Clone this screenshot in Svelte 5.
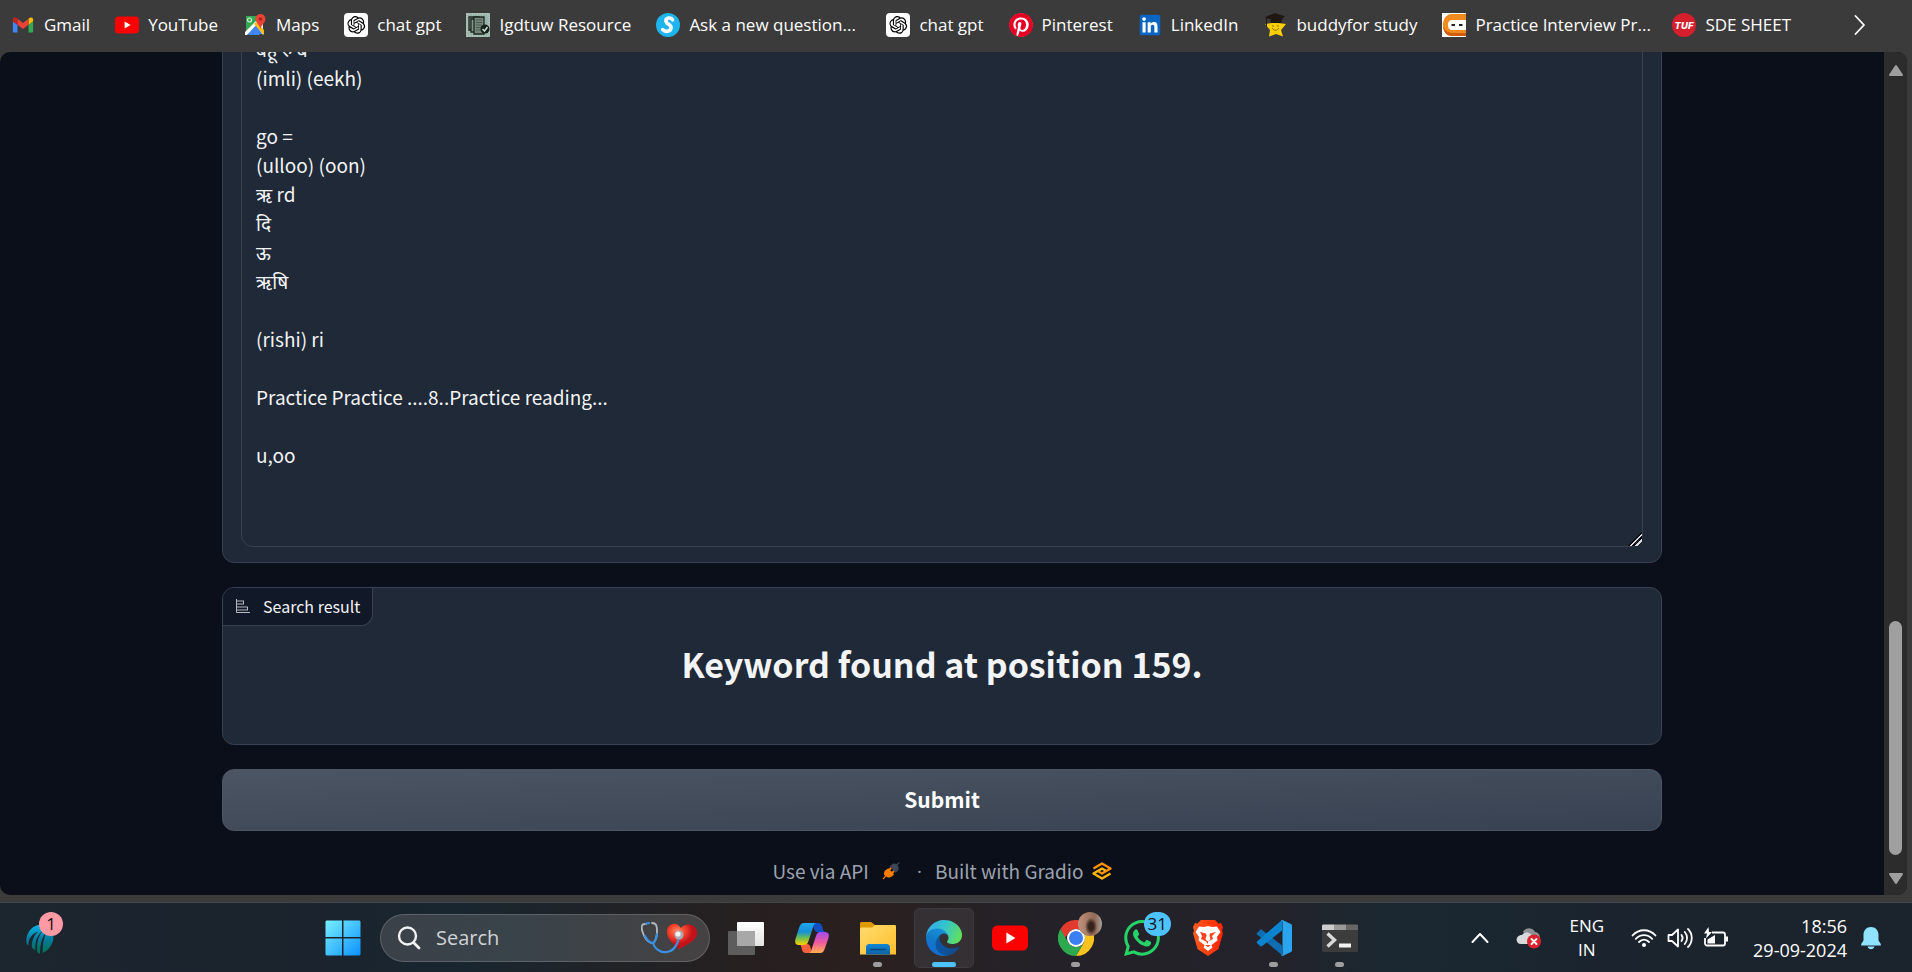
<script>
  const bookmarks = [
    { icon: 'gmail', label: 'Gmail' },
    { icon: 'youtube', label: 'YouTube' },
    { icon: 'maps', label: 'Maps' },
    { icon: 'openai', label: 'chat gpt' },
    { icon: 'docs', label: 'Igdtuw Resource' },
    { icon: 'ask', label: 'Ask a new question...', clipped: true },
    { icon: 'openai', label: 'chat gpt' },
    { icon: 'pinterest', label: 'Pinterest' },
    { icon: 'linkedin', label: 'LinkedIn' },
    { icon: 'buddy', label: 'buddyfor study' },
    { icon: 'ninja', label: 'Practice Interview Pr...', clipped: true },
    { icon: 'tuf', label: 'SDE SHEET' }
  ];

  const apps = [
    { icon: 'taskview' },
    { icon: 'copilot' },
    { icon: 'explorer', open: true },
    { icon: 'edge', active: true },
    { icon: 'youtube' },
    { icon: 'chrome', open: true },
    { icon: 'whatsapp', badge: '31' },
    { icon: 'brave' },
    { icon: 'vscode', open: true },
    { icon: 'terminal', open: true }
  ];

  let text = $state(
    [
      'बहू रु ब',
      '(imli) (eekh)',
      '',
      'go =',
      '(ulloo) (oon)',
      'ऋ rd',
      'दि',
      'ऊ',
      'ऋषि',
      '',
      '(rishi) ri',
      '',
      'Practice Practice ....8..Practice reading...',
      '',
      'u,oo'
    ].join('\n')
  );
</script>

{#snippet icon(name)}
  {#if name === 'gmail'}
    <svg viewBox="44 27 104 96"><path fill="#4285f4" d="M58 108h14V74L52 59v43c0 3.32 2.69 6 6 6" /><path fill="#34a853" d="M120 108h14c3.32 0 6-2.69 6-6V59l-20 15" /><path fill="#fbbc04" d="M120 48v26l20-15v-8c0-7.42-8.47-11.65-14.4-7.2" /><path fill="#ea4335" d="M72 74V48l24 18 24-18v26L96 92" /><path fill="#c5221f" d="M52 51v8l20 15V48l-5.6-4.2c-5.94-4.45-14.4-.22-14.4 7.2" /></svg>
  {:else if name === 'youtube'}
    <svg viewBox="0 0 24 24"><rect y="3.6" width="24" height="16.8" rx="3.6" fill="#f00" /><path fill="#fff" d="M9.6 8.4v7.2l6-3.6z" /></svg>
  {:else if name === 'maps'}
    <svg viewBox="0 0 24 24">
      <path fill="#34a853" d="M3 3h14v9L3 21z" /><path fill="#4285f4" d="M3 21 12 12l9 9z" /><path fill="#fff" d="M2 19 15 6l2 2L4 22H2z" /><path fill="#e8eaed" d="m13 12 7-3v13z" /><path fill="#fbbc04" d="m11 11 2-2 8 8v5z" /><path fill="#4285f4" d="m5 22 6-7 6 7z" />
      <circle cx="6.5" cy="7" r="2" fill="none" stroke="#d5efdc" stroke-width="1.2" />
      <path fill="#ea4335" d="M17.500 1a5 5 0 0 1 5 5c0 4-4 5-5 10-1-5-5-6-5-10a5 5 0 0 1 5-5z" /><circle cx="17.500" cy="6" r="1.800" fill="#a52714" />
    </svg>
  {:else if name === 'openai'}
    <svg viewBox="0 0 24 24"><rect width="24" height="24" rx="4" fill="#fff" /><g transform="translate(3.4 3) scale(.74)"><path d="M22.2819 9.8211a5.9847 5.9847 0 0 0-.5157-4.9108 6.0462 6.0462 0 0 0-6.5098-2.9A6.0651 6.0651 0 0 0 4.9807 4.1818a5.9847 5.9847 0 0 0-3.9977 2.9 6.0462 6.0462 0 0 0 .7427 7.0966 5.98 5.98 0 0 0 .511 4.9107 6.051 6.051 0 0 0 6.5146 2.9001A5.9847 5.9847 0 0 0 13.2599 24a6.0557 6.0557 0 0 0 5.7718-4.2058 5.9894 5.9894 0 0 0 3.9977-2.9001 6.0557 6.0557 0 0 0-.7475-7.0729zm-9.022 12.6081a4.4755 4.4755 0 0 1-2.8764-1.0408l.1419-.0804 4.7783-2.7582a.7948.7948 0 0 0 .3927-.6813v-6.7369l2.02 1.1686a.071.071 0 0 1 .038.052v5.5826a4.504 4.504 0 0 1-4.4945 4.4944zm-9.6607-4.1254a4.4708 4.4708 0 0 1-.5346-3.0137l.142.0852 4.783 2.7582a.7712.7712 0 0 0 .7806 0l5.8428-3.3685v2.3324a.0804.0804 0 0 1-.0332.0615L9.74 19.9502a4.4992 4.4992 0 0 1-6.1408-1.6464zM2.3408 7.8956a4.485 4.485 0 0 1 2.3655-1.9728V11.6a.7664.7664 0 0 0 .3879.6765l5.8144 3.3543-2.0201 1.1685a.0757.0757 0 0 1-.071 0l-4.8303-2.7865A4.504 4.504 0 0 1 2.3408 7.872zm16.5963 3.8558L13.1038 8.364 15.1192 7.2a.0757.0757 0 0 1 .071 0l4.8303 2.7913a4.4944 4.4944 0 0 1-.6765 8.1042v-5.6772a.79.79 0 0 0-.407-.667zm2.0107-3.0231l-.142-.0852-4.7735-2.7818a.7759.7759 0 0 0-.7854 0L9.409 9.2297V6.8974a.0662.0662 0 0 1 .0284-.0615l4.8303-2.7866a4.4992 4.4992 0 0 1 6.6802 4.66zM8.3065 12.863l-2.02-1.1638a.0804.0804 0 0 1-.038-.0567V6.0742a4.4992 4.4992 0 0 1 7.3757-3.4537l-.142.0805L8.704 5.459a.7948.7948 0 0 0-.3927.6813zm1.0976-2.3654l2.602-1.4998 2.6069 1.4998v2.9994l-2.5974 1.4997-2.6067-1.4997Z" /></g></svg>
  {:else if name === 'docs'}
    <svg viewBox="0 0 24 24"><rect width="24" height="24" fill="#9cb5ab" /><path fill="none" stroke="#c9ddd4" stroke-dasharray="1 1.500" d="M1 1h22v22H1z" /><path fill="#76867b" stroke="#1d2822" stroke-width="1.300" d="M3 4h10v13H3z" /><path fill="#83968a" stroke="#1d2822" stroke-width="1.300" d="M5 6h10v13H5z" /><path fill="#76867b" stroke="#1d2822" stroke-width="1.300" d="M8 4h10v17H8z" /><path stroke="#48584e" d="M10 7h6M10 9.500h6M10 12h6M10 14.500h5M10 17h5" /><circle cx="19" cy="16" r="4.500" fill="#15201a" /><path fill="none" stroke="#c9ddd4" stroke-width="1.500" d="m16.500 16 2 2 3-4" /></svg>
  {:else if name === 'ask'}
    <svg viewBox="0 0 24 24"><circle cx="12" cy="12" r="12" fill="#1eb4ee" /><path fill="none" stroke="#fff" stroke-width="3.600" stroke-linecap="round" d="M16.500 6.800c-1.500-3-7-2-6.600 1.400C10.200 11.500 15.500 11 15 15c-.5 3.800-6 4.300-8.300 1.600" /></svg>
  {:else if name === 'pinterest'}
    <svg viewBox="0 0 24 24"><circle cx="12" cy="12" r="11.500" fill="#fff" /><path fill="#e60023" d="M12.017 0C5.396 0 .029 5.367.029 11.987c0 5.079 3.158 9.417 7.618 11.162-.105-.949-.199-2.403.041-3.439.219-.937 1.406-5.957 1.406-5.957s-.359-.72-.359-1.781c0-1.663.967-2.911 2.168-2.911 1.024 0 1.518.769 1.518 1.688 0 1.029-.653 2.567-.992 3.992-.285 1.193.6 2.165 1.775 2.165 2.128 0 3.768-2.245 3.768-5.487 0-2.861-2.063-4.869-5.008-4.869-3.41 0-5.409 2.562-5.409 5.199 0 1.033.394 2.143.889 2.741.099.12.112.225.085.345-.09.375-.293 1.199-.334 1.363-.053.225-.172.271-.401.165-1.495-.69-2.433-2.878-2.433-4.646 0-3.776 2.748-7.252 7.92-7.252 4.158 0 7.392 2.967 7.392 6.923 0 4.135-2.607 7.462-6.233 7.462-1.214 0-2.354-.629-2.758-1.379l-.749 2.848c-.269 1.045-1.004 2.352-1.498 3.146 1.123.345 2.306.535 3.55.535 6.607 0 11.985-5.365 11.985-11.987C23.97 5.39 18.592.026 11.985.026L12.017 0z" /></svg>
  {:else if name === 'linkedin'}
    <svg viewBox="-1.500 -1.500 27 27"><rect x="0.500" y="0.500" width="23" height="23" rx="1.800" fill="#0a66c2" /><path fill="#fff" d="M20.447 20.452h-3.554v-5.569c0-1.328-.027-3.037-1.852-3.037-1.853 0-2.136 1.445-2.136 2.939v5.667H9.351V9h3.414v1.561h.046c.477-.9 1.637-1.85 3.37-1.85 3.601 0 4.267 2.37 4.267 5.455v6.286zM5.337 7.433c-1.144 0-2.063-.926-2.063-2.065 0-1.138.92-2.063 2.063-2.063 1.14 0 2.064.925 2.064 2.063 0 1.139-.925 2.065-2.064 2.065zm1.782 13.019H3.555V9h3.564v11.452z" /></svg>
  {:else if name === 'buddy'}
    <svg viewBox="0 0 24 24"><path fill="#fbd000" d="m12 5 3 5 8 1-5 6 2 6.500-7-2.500-7 2.500L7 17l-5-6 7-1z" /><path fill="#211712" d="m2 4 10-4 10 3.500L19 6l-.5 4H8l-.5-4L4 5.500V13H3V5z" /><path fill="none" stroke="#8a6a00" stroke-linecap="round" d="M10 12.500v1M15 12.500v1M9.500 15.500c1.500 2.500 4.500 2.500 6 0" /></svg>
  {:else if name === 'ninja'}
    <svg viewBox="0 0 24 24"><rect width="24" height="24" fill="#fff" /><path fill="#f28b1d" d="M24 1v6H11c-4 0-5 2-5 5s1 5 5 5h13v6H10C4 23 1 18 1 12S4 1 10 1z" /><path fill="#cf5c12" d="M1 13c.5 6 3.500 10 9 10h14v-3H11c-5 0-8-2-10-7z" /><rect x="7" y="8" width="16" height="8" rx="3" fill="#fff" /><path stroke="#222" stroke-width="2" d="M9.500 12H13M17 12h3.500" /></svg>
  {:else if name === 'tuf'}
    <svg viewBox="0 0 24 24"><circle cx="12" cy="12" r="12" fill="#d51f2d" /><text x="12" y="15.500" text-anchor="middle" font-family="Inter, sans-serif" font-size="9.500" font-weight="800" font-style="italic" fill="#fff">TUF</text></svg>
  {:else if name === 'taskview'}
    <svg viewBox="0 0 36 36"><defs><linearGradient id="tv" x2="0" y2="1"><stop stop-color="#fff" /><stop offset="1" stop-color="#e2e2e2" /></linearGradient></defs><rect x="9" y="2" width="27" height="24" rx="1" fill="url(#tv)" /><rect y="11" width="27" height="24" rx="1" fill="#5d5d5d" /><path fill="#a8a8a8" d="M9 11h18v15H9z" /></svg>
  {:else if name === 'copilot'}
    <svg viewBox="0 0 36 36">
      <defs><linearGradient id="cp1" x2="0" y2="1"><stop stop-color="#1ea7f0" /><stop offset=".4" stop-color="#1690d8" /><stop offset=".65" stop-color="#62bb5a" /><stop offset="1" stop-color="#ffd000" /></linearGradient><linearGradient id="cp2" x2="0" y2="1"><stop stop-color="#a24bf0" /><stop offset=".5" stop-color="#ef5a9c" /><stop offset="1" stop-color="#ffae52" /></linearGradient></defs>
      <path fill="#1350c4" d="M17 3h7c3 0 4 2.500 4.500 5 .5 2.500 1.500 4 3.500 4h-9c-4 0-3-9-6-9z" /><path fill="#f4603c" d="M19 33h-7c-3 0-4-2.500-4.500-5-.5-2.500-1-4-3-4h9c4 0 3 9 5.500 9z" />
      <path fill="url(#cp1)" d="M10 3h13c-3 0-3.500 3-4.500 6l-4 12c-1 3-2.500 4-5 4H6c-4.500 0-5.500-2-4.500-6L5 8c1-3 2-5 5-5z" /><path fill="url(#cp2)" d="M26 33H14c3 0 3-2 4-5l4-12c1-3 2-4 4-4h4c4.500 0 5.500 2 4.500 6L31 28c-1 3-2 5-5 5z" />
    </svg>
  {:else if name === 'explorer'}
    <svg viewBox="0 0 36 36"><defs><linearGradient id="fx" x2="1" y2="1"><stop stop-color="#ffdc6e" /><stop offset="1" stop-color="#ffbe2c" /></linearGradient><linearGradient id="fx2" x2="0" y2="1"><stop stop-color="#0f86d4" /><stop offset="1" stop-color="#0e62a6" /></linearGradient></defs><path fill="#e09a00" d="M0 4c0-1.500.5-2 2-2h9l4 3h19c1.500 0 2 .5 2 2v5H0z" /><path fill="url(#fx)" d="M0 10c0-2 .5-2.500 2-2.500h10L15 5h19c1.500 0 2 .5 2 2v27.500H0z" /><path fill="url(#fx2)" d="M6 34.500V28c0-3 1-4 4-4h16c3 0 4 1 4 4v6.500z" /><path stroke="#0a467c" stroke-width="1.600" stroke-linecap="round" d="M11 29.500h14" /></svg>
  {:else if name === 'edge'}
    <svg viewBox="0 0 256 256">
      <defs><linearGradient id="eg1" x2="1"><stop stop-color="#0c59a4" /><stop offset="1" stop-color="#114a8b" /></linearGradient><linearGradient id="eg2" x1="1" x2=".3" y2="1"><stop stop-color="#1b9de2" /><stop offset=".6" stop-color="#127cc8" /><stop offset="1" stop-color="#1568d5" /></linearGradient><linearGradient id="eg3" y1=".3" x2="1" y2=".6"><stop stop-color="#35a8e8" /><stop offset=".45" stop-color="#34c3cf" /><stop offset="1" stop-color="#62e05a" /></linearGradient></defs>
      <path fill="url(#eg1)" d="M231 190.500c-3.400 1.800-6.900 3.400-10.500 4.700a101.500 101.500 0 0 1-35.900 6.500c-47.300 0-88.500-32.500-88.500-74.300 0-11.400 6.400-21.900 16.400-27.300-42.800 1.800-53.800 46.400-53.800 72.500 0 73.900 68.100 81.400 82.800 81.400 7.900 0 19.800-2.300 27-4.600l1.300-.4a128.300 128.300 0 0 0 66.600-52.800 4 4 0 0 0-5.400-5.700z" />
      <path fill="url(#eg2)" d="M105.700 241.400a79.200 79.200 0 0 1-22.700-21.300 80.700 80.700 0 0 1 29.500-120c3.200-1.500 8.500-4.100 15.600-4a32.400 32.400 0 0 1 25.700 13 31.900 31.900 0 0 1 6.300 18.700c0-.2 24.500-79.600-80-79.600-43.900 0-80 41.600-80 78.200 0 19.300 4.300 38.600 12.500 56a128 128 0 0 0 156.400 67.100 75.500 75.500 0 0 1-62.800-8z" />
      <path fill="url(#eg3)" d="M152.300 148.900c-.9 1-3.300 2.500-3.300 5.700 0 2.600 1.700 5.200 4.800 7.300 14.400 10.100 41.700 8.700 41.800 8.700 10.700 0 21.100-2.900 30.300-8.300 18.900-11 30.500-31.200 30.500-53.100.3-22.400-8-37.300-11.300-43.900C223.800 23.900 177.700 0 127.600 0 57.800 0 .6 56.700 0 126.500c.5-36.500 36.800-66 80-66 3.500 0 23.500.3 42 10.100 16.300 8.600 24.900 18.900 30.800 29.200 6.200 10.700 7.300 24.100 7.300 29.500 0 5.300-2.700 13.300-7.800 19.600z" />
    </svg>
  {:else if name === 'chrome'}
    <svg viewBox="0 0 36 36"><path fill="#e33b2e" d="M2.400 9A18 18 0 0 1 33.600 9H18a9 9 0 0 0-7.800 4.500L7 18z" /><path fill="#fcc31e" d="M33.600 9A18 18 0 0 1 18 36l7.800-13.500A9 9 0 0 0 25.800 13.500L24 9z" /><path fill="#2da94f" d="M18 36A18 18 0 0 1 2.400 9l7.800 13.500A9 9 0 0 0 25.800 22.500z" /><circle cx="18" cy="18" r="9" fill="#fff" /><circle cx="18" cy="18" r="7" fill="#3a7ff2" /></svg>
  {:else if name === 'whatsapp'}
    <svg viewBox="0 0 24 24"><path fill="#25d366" d="M17.472 14.382c-.297-.149-1.758-.867-2.03-.967-.273-.099-.471-.148-.67.15-.197.297-.767.966-.94 1.164-.173.199-.347.223-.644.075-.297-.15-1.255-.463-2.39-1.475-.883-.788-1.48-1.761-1.653-2.059-.173-.297-.018-.458.13-.606.134-.133.298-.347.446-.52.149-.174.198-.298.298-.497.099-.198.05-.371-.025-.52-.075-.149-.669-1.612-.916-2.207-.242-.579-.487-.5-.669-.51-.173-.008-.371-.01-.57-.01-.198 0-.52.074-.792.372-.272.297-1.04 1.016-1.04 2.479 0 1.462 1.065 2.875 1.213 3.074.149.198 2.096 3.2 5.077 4.487.709.306 1.262.489 1.694.625.712.227 1.36.195 1.871.118.571-.085 1.758-.719 2.006-1.413.248-.694.248-1.289.173-1.413-.074-.124-.272-.198-.57-.347m-5.421 7.403h-.004a9.87 9.87 0 01-5.031-1.378l-.361-.214-3.741.982.998-3.648-.235-.374a9.86 9.86 0 01-1.51-5.26c.001-5.45 4.436-9.884 9.888-9.884 2.64 0 5.122 1.03 6.988 2.898a9.825 9.825 0 012.893 6.994c-.003 5.45-4.437 9.884-9.885 9.884m8.413-18.297A11.815 11.815 0 0012.05 0C5.495 0 .16 5.335.157 11.892c0 2.096.547 4.142 1.588 5.945L.057 24l6.305-1.654a11.882 11.882 0 005.683 1.448h.005c6.554 0 11.89-5.335 11.893-11.893a11.821 11.821 0 00-3.48-8.413z" /></svg>
  {:else if name === 'brave'}
    <svg viewBox="0 0 36 36"><defs><linearGradient id="br" x2="1"><stop stop-color="#ff5a1f" /><stop offset="1" stop-color="#ff2400" /></linearGradient></defs><path fill="url(#br)" d="M11 0h14l3.500 3.500L31 3l2 4-1 4 1 2-4.500 16L18 36 7.500 29 3 13l1-2-1-4 2-4 2.500.5z" /><path fill="#fff" d="m18 6 4 1 5-.5 3.500 5.500-3.500 5 .5 3.500-4 3-2 1.500 1 2.500L18 31l-4.500-3.500 1-2.500-2-1.500-4-3 .5-3.500-3.500-5L9 6.500l5 .5z" /><path fill="#ff401a" d="m10 12 6 1.500.5 2-1 3.500 1.500 2h2l1.500-2-1-3.500.5-2 6-1.500-4 4 1 3-5 2.500L18 24l-2-2.500-5-2.500 1-3zM15 25h6l-3 2z" /></svg>
  {:else if name === 'vscode'}
    <svg viewBox="0 0 36 36"><path fill="#0f6db3" d="m1 13 3-3c.7-.6 1.500-.6 2.200 0L26 25.500V35L1 14.500c-.6-.5-.6-1 0-1.500z" /><path fill="#0b84cf" d="m1 23 3 3c.7.6 1.500.6 2.200 0L26 10.500V0L1 21.500c-.6.5-.6 1 0 1.500z" /><path fill="#2aa4ee" d="M25 .8c.5-.7 1.200-.9 2-.5l7.500 3.500c1 .5 1.500 1 1.500 2v24.400c0 1-.5 1.500-1.500 2L27 35.700c-.8.4-1.500.2-2-.5l1.500-.7V1.500z" /></svg>
  {:else if name === 'terminal'}
    <svg viewBox="0 0 36 36"><path fill="#3c3c3c" d="M0 6h36v24c0 1.500-.5 2-2 2H2c-1.500 0-2-.5-2-2z" /><path fill="#ccc" d="M0 6c0-1 .5-1.500 1.500-1.500H12V10H0z" /><path fill="#999" d="M12 4.500h12V10H12z" /><path fill="#666" d="M24 4.500h10.500c1 0 1.500.5 1.500 1.500v4H24z" /><path fill="none" stroke="#d8d8d8" stroke-width="3.400" d="m5.500 13.500 7 6.500-7 6.500" /><path fill="#f2f2f2" d="M17 23.500h12v4H17z" /></svg>
  {/if}
{/snippet}

<div class="screen">
  <nav class="bookmarks" aria-label="Bookmarks">
    <ul>
      {#each bookmarks as b}
        <li><a href="#top">{@render icon(b.icon)}<span class:clipped={b.clipped}>{b.label}</span></a></li>
      {/each}
    </ul>
    <button class="more" aria-label="More bookmarks">
      <svg viewBox="0 0 12 20"><path fill="none" stroke="#fff" stroke-width="1.800" stroke-linecap="round" stroke-linejoin="round" d="m1.500 1 8.500 9-8.500 9" /></svg>
    </button>
  </nav>

  <div class="window">
    <div class="page">
      <main>
        <section class="panel source">
          <textarea rows="17" aria-label="Extracted text" spellcheck="false" bind:value={text}></textarea>
        </section>

        <section class="panel result">
          <div class="tab">
            <svg viewBox="0 0 32 32" width="16" height="16"><path fill="#b6bac2" d="M4 2H2v26a2 2 0 0 0 2 2h26v-2H4v-3h22v-8H4v-4h14V5H4zm20 17v4H4v-4zM16 7v4H4V7z" /></svg>
            <span>Search result</span>
          </div>
          <h1>Keyword found at position 159.</h1>
        </section>

        <button class="submit">Submit</button>

        <footer>
          <button class="api">Use via API
            <svg viewBox="0 0 18 18" width="18" height="18"><path fill="#ff7c00" d="m6.500 6.500 5.500 5.500c-1.500 3.500-5.500 4.500-8 2.500l-2.500 3L.5 16.500l2.500-2.500c-2-2.500-1-6 3.500-7.500z" /><path stroke="#ff7c00" stroke-width="1.800" stroke-linecap="round" d="m7 8 2-2M10 11l2-2" /><path fill="#3d4656" d="m8 5 5.500 5.500c3.500-1.500 4-5 2-7.300L17.800 1l-.8-.8-2.500 2C12.500.5 9 1.500 8 5z" /></svg>
          </button>
          <span class="dot">·</span>
          <a href="#gradio">Built with Gradio
            <svg viewBox="0 0 20 18" width="20" height="18"><g fill="none" stroke-width="2.400" stroke-linejoin="round"><path stroke="#ff9100" d="M1.500 6.500 10 1.500l8.500 5L10 11.500 6.500 9.500" /><path stroke="#ffb400" d="M18.500 11.500 10 16.500l-8.500-5L10 6.500l3.500 2" /></g></svg>
          </a>
        </footer>
      </main>
    </div>
    <div class="scrollbar" aria-hidden="true">
      <svg viewBox="0 0 16 12"><path fill="#9f9f9f" stroke="#9f9f9f" stroke-width="2" stroke-linejoin="round" d="m8 2 6 9H2z" /></svg>
      <div class="track"><div class="thumb"></div></div>
      <svg viewBox="0 0 16 12"><path fill="#9f9f9f" stroke="#9f9f9f" stroke-width="2" stroke-linejoin="round" d="m8 10 6-9H2z" /></svg>
    </div>
  </div>

  <div class="taskbar">
    <button class="task widgets" aria-label="Widgets">
      <svg viewBox="0 0 36 36"><defs><linearGradient id="wd" x2="0" y2="1"><stop stop-color="#08b5ea" /><stop offset=".5" stop-color="#057a9b" /><stop offset="1" stop-color="#05714a" /></linearGradient></defs><path fill="url(#wd)" d="M3 25C1 13 9 2 22 3c8 1 12 8 11 16-1 7-6 13-12 16 0-11 1-17 5-24-6 5-8 15-8 25l-3-2c-1-11 1-18 6-24-7 5-9 14-8 22l-4-3C8 22 11 15 16 11 9 13 5 19 5 26z" /></svg>
      <span class="badge pink">1</span>
    </button>

    <div class="center">
      <button class="task" aria-label="Start">
        <svg viewBox="0 0 36 36"><defs><linearGradient id="st" gradientUnits="userSpaceOnUse" x2="36" y2="36"><stop stop-color="#7af0ff" /><stop offset="1" stop-color="#0a90ff" /></linearGradient></defs><path fill="url(#st)" d="M1.500.5H17V17H.5V1.500zM18.500.5h16l1 1V17h-17zM.5 18.500H17v17H1.500l-1-1zM18.500 18.500h17v16l-1 1h-16z" /></svg>
      </button>
      <label class="search">
        <svg class="glass" viewBox="0 0 24 24"><circle cx="10.500" cy="10" r="8.500" fill="none" stroke="#f0f2f3" stroke-width="2.400" /><path stroke="#f0f2f3" stroke-width="2.800" stroke-linecap="round" d="m17 17 5 5" /></svg>
        <input type="text" placeholder="Search" aria-label="Search" />
        <svg class="art" viewBox="0 0 58 34">
          <defs><radialGradient id="ht" cx=".35" cy=".3"><stop stop-color="#ff8f6b" /><stop offset=".5" stop-color="#f4442e" /><stop offset="1" stop-color="#c3121a" /></radialGradient></defs>
          <path fill="url(#ht)" d="M38 28c-7-6-13-11-12-19 1-7 10-9 14-2 5-6 15-4 16 4 1 7-8 12-18 17z" />
          <path fill="none" stroke="#aeb7c0" stroke-width="1.800" stroke-linecap="round" d="M5 3C0 2 0 7 2 12c2 6 5 9 8 10M11 2c5 0 5 4 5 9s-2 10-4 11" />
          <path fill="none" stroke="#3c8fe0" stroke-width="2.200" stroke-linecap="round" d="M5 2.500 8 2M4 15c2 4 5 7 8 7 2-1 4-6 4-9M12 22c2 7 9 10 14 9 7-1 11-8 12-15" />
          <circle cx="38" cy="14" r="4.500" fill="#a7acb2" /><circle cx="37" cy="13" r="2.600" fill="#f1f1f1" />
        </svg>
      </label>
      {#each apps as app}
        <button class="task" class:active={app.active} aria-label={app.icon}>
          {@render icon(app.icon)}
          {#if app.badge}<span class="badge blue">{app.badge}</span>{/if}
          {#if app.icon === 'chrome'}<span class="badge avatar"></span>{/if}
          {#if app.open || app.active}<span class="mark"></span>{/if}
        </button>
      {/each}
    </div>

    <div class="tray">
      <button aria-label="Hidden icons"><svg width="18" height="12" viewBox="0 0 18 12"><path fill="none" stroke="#fff" stroke-width="2" stroke-linecap="round" stroke-linejoin="round" d="m1.500 10 7.500-8 7.500 8" /></svg></button>
      <button aria-label="Cloud sync error"><svg width="26" height="22" viewBox="0 0 26 22"><path fill="#8d9194" d="M7 5c2-5 10-5 12 0 3 0 5 3 5 6l-8 2z" /><path fill="#d7d9da" d="M5 17c-6 0-6-9 1-9 4-5 10-2 11 3l-2 6z" /><circle cx="18" cy="14.500" r="7" fill="#d9232e" /><path stroke="#fff" stroke-width="1.800" stroke-linecap="round" d="m15.500 12 5 5m0-5-5 5" /></svg></button>
      <button class="lang">ENG<br />IN</button>
      <button class="status" aria-label="Network, sound and battery">
        <svg width="26" height="20" viewBox="0 0 26 20"><g fill="none" stroke="#fff" stroke-width="1.800" stroke-linecap="round"><path d="M1.500 7.500c6.500-7 16.500-7 23 0M4.800 10.800c4.700-5 11.700-5 16.400 0M8 14c3-3 7-3 10 0" /></g><circle cx="13" cy="17" r="2" fill="#fff" /></svg>
        <svg width="26" height="22" viewBox="0 0 26 22"><g fill="none" stroke="#fff" stroke-width="1.800" stroke-linecap="round" stroke-linejoin="round"><path d="M1.500 8v6H5l6 5.500v-17L5 8zM14.500 8c1.500 2 1.500 4 0 6M17.800 5c3 3.500 3 8.500 0 12M21 2c5 5 5 13 0 18" /></g></svg>
        <svg width="26" height="22" viewBox="0 0 26 22"><path fill="none" stroke="#fff" stroke-width="1.800" stroke-linejoin="round" d="M9 5.500h11c1 0 2 1 2 2v9c0 1-1 2-2 2H4c-1 0-2-1-2-2V11" /><path fill="#fff" d="M22.500 9.500H25v5h-2.500zM4.500 12.500 12 8v8.500H4.500zM5.500 0 1 6.500h3l-1 5L9 5H6z" /></svg>
      </button>
      <button class="clock">18:56<br />29-09-2024</button>
      <button aria-label="Notifications"><svg width="20" height="24" viewBox="0 0 20 24"><path fill="#8fe3ff" d="M10 1c4.500 0 7.500 3.500 7.500 8v5.500L19.800 18v1.500H.2V18l2.300-3.500V9C2.500 4.500 5.500 1 10 1zM6.500 20.500h7c-1 3.500-6 3.500-7 0z" /></svg></button>
    </div>
  </div>
</div>

<style>
  :global(body) {
    margin: 0;
    background: #3b3b3b;
  }
  .screen {
    --ui: 'Segoe UI', 'Open Sans', 'Noto Sans', sans-serif;
    --source: 'Source Sans Pro', 'Noto Sans CJK SC', 'Noto Sans', sans-serif;
    display: grid;
    grid-template-rows: 52px minmax(0, 1fr) 70px;
    height: 100vh;
    overflow: hidden;
    font-family: var(--ui);
    background: #3b3b3b;
  }
  button {
    padding: 0;
    border: 0;
    background: none;
    color: inherit;
    font: inherit;
  }
  a {
    color: inherit;
    text-decoration: none;
  }
  svg {
    display: block;
    flex: none;
  }

  .bookmarks {
    display: flex;
    align-items: center;
    justify-content: space-between;
    padding: 0 46px 2px 11px;
    color: #fff;
    font-size: 17px;
    line-height: 24px;
  }
  ul {
    display: flex;
    gap: 25px;
    margin: 0;
    padding: 0;
    list-style: none;
  }
  li a {
    display: flex;
    gap: 9px;
    white-space: nowrap;
  }
  li svg {
    width: 24px;
    height: 24px;
  }
  .clipped {
    width: 172px;
  }
  .more svg {
    width: 12px;
    height: 20px;
  }

  .window {
    display: flex;
    min-height: 0;
    margin: 0 5px 7px 0;
    border-radius: 10px;
    overflow: hidden;
    background: #0b0f19;
  }
  .page {
    flex: 1;
    display: flex;
    flex-direction: column;
    justify-content: flex-end;
    align-items: center;
    min-width: 0;
    overflow: hidden;
    font-family: var(--source);
  }
  main {
    display: flex;
    flex-direction: column;
    gap: 24px;
    width: 100%;
    max-width: 1440px;
  }
  .panel {
    border: 1px solid #374151;
    border-radius: 12px;
    background: #1f2937;
    color: #f3f4f6;
  }
  .source {
    display: flex;
    padding: 15px 18px;
  }
  textarea {
    flex: 1;
    padding: 15px 14px 19px;
    border: 1px solid #374151;
    border-radius: 12px;
    background: #1f2937;
    color: #f3f4f6;
    font-family: var(--source);
    font-size: 19px;
    line-height: 29px;
    resize: vertical;
    outline: 0;
    overflow: hidden;
  }
  textarea::-webkit-resizer {
    background: linear-gradient(135deg, transparent 52%, #0a0d12 52% 57%, #d5d8dc 57% 65%, #0a0d12 65% 70%, transparent 70% 73%, #0a0d12 73% 76%, #d5d8dc 76% 84%, transparent 84%);
  }
  .result {
    min-height: 156px;
    overflow: hidden;
  }
  .tab {
    display: flex;
    align-items: center;
    gap: 12px;
    width: max-content;
    height: 36px;
    padding: 0 12px 1px;
    border: solid #374151;
    border-width: 0 1px 1px 0;
    border-radius: 0 0 12px 0;
    background: #111827;
    font-size: 16px;
    line-height: 24px;
  }
  h1 {
    margin: 10px 0 0;
    text-align: center;
    font-size: 34px;
    line-height: 56px;
    font-weight: 600;
  }
  .submit {
    height: 62px;
    padding-bottom: 2px;
    border: 1px solid #4b5563;
    border-radius: 12px;
    background: linear-gradient(to bottom right, #4b5563, #374151);
    color: #fff;
    font-size: 21px;
    line-height: 32px;
    font-weight: 600;
  }
  footer {
    display: flex;
    justify-content: center;
    gap: 13px;
    padding-bottom: 8px;
    color: #9ca3af;
    font-size: 19px;
    line-height: 32px;
  }
  footer button,
  footer a {
    display: flex;
    align-items: center;
    gap: 8px;
  }
  footer .api {
    gap: 13px;
    margin-right: 4px;
  }
  .dot {
    font-family: var(--ui);
  }

  .scrollbar {
    display: flex;
    flex-direction: column;
    align-items: center;
    width: 23px;
    padding: 12px 0 10px;
    box-sizing: border-box;
    background: #2c2c2c;
  }
  .scrollbar svg {
    width: 16px;
    height: 12px;
  }
  .track {
    flex: 1;
    display: flex;
    flex-direction: column;
    justify-content: flex-end;
    padding-bottom: 18px;
  }
  .thumb {
    width: 13px;
    height: 30%;
    border-radius: 7px;
    background: #9f9f9f;
  }

  .taskbar {
    display: grid;
    grid-template-columns: 313px auto 1fr;
    align-items: center;
    border-top: 1px solid #44474a;
    box-sizing: border-box;
    color: #fff;
    background: linear-gradient(to right, #1c262f, #1b232d 14%, #19262f 24%, #271f1f 40%, #2a2020 46%, #242228 54%, #24222a 66%, #1a2831 73%, #1b232d 87%, #1b232d);
  }
  .task {
    position: relative;
    display: grid;
    place-items: center;
    box-sizing: border-box;
    width: 60px;
    height: 60px;
    border: 1px solid transparent;
    border-radius: 6px;
  }
  .task svg {
    width: 36px;
    height: 36px;
  }
  .widgets {
    margin-left: 10px;
  }
  .widgets svg {
    width: 32px;
    height: 34px;
  }
  .active {
    background: #343034;
    border-color: #3e3b3f;
  }
  .center {
    display: flex;
    align-items: center;
    gap: 6px;
  }
  .badge {
    position: absolute;
    top: 3px;
    right: 6px;
    min-width: 24px;
    height: 24px;
    box-sizing: border-box;
    border-radius: 12px;
    color: #111;
    font-size: 17px;
    line-height: 24px;
    text-align: center;
  }
  .pink {
    background: #ff99a4;
  }
  .blue {
    right: 0;
    padding: 0 4px;
    background: #4cc2ff;
  }
  .avatar {
    right: 3px;
    background: radial-gradient(ellipse 6px 9px at 55% 60%, #38241f 0 45%, #8d6753 90%, transparent), linear-gradient(to right, #c2917c, #8f6a56 70%, #a9a09a);
  }
  .mark {
    position: absolute;
    bottom: 0;
    left: calc(50% - 5px);
    width: 9px;
    height: 5px;
    border-radius: 3px;
    background: #a09da0;
  }
  .active .mark {
    left: calc(50% - 12px);
    width: 24px;
    background: #4cc2ff;
  }
  .search {
    display: flex;
    align-items: center;
    box-sizing: border-box;
    width: 330px;
    height: 48px;
    margin-left: 1px;
    padding: 0 10px 0 16px;
    border: 1px solid #ffffff2b;
    border-radius: 24px;
    background: linear-gradient(to right, #3b4149, #39434a 40%, #454242);
  }
  .search input {
    flex: 1;
    min-width: 0;
    padding: 0 0 0 15px;
    border: 0;
    outline: 0;
    background: none;
    color: #fff;
    font-family: var(--ui);
    font-size: 20px;
    line-height: 28px;
  }
  .search input::placeholder {
    color: #d0d3d5;
    opacity: 1;
  }
  .glass {
    width: 24px;
    height: 24px;
  }
  .art {
    width: 58px;
    height: 34px;
  }
  .tray {
    display: flex;
    align-items: center;
    justify-content: flex-end;
    gap: 27px;
    padding-right: 31px;
    font-size: 17px;
    line-height: 24px;
  }
  .status {
    display: flex;
    align-items: center;
    gap: 10px;
  }
  .clock {
    margin-right: -13px;
    margin-left: -3px;
    font-size: 18px;
    text-align: right;
  }
</style>
